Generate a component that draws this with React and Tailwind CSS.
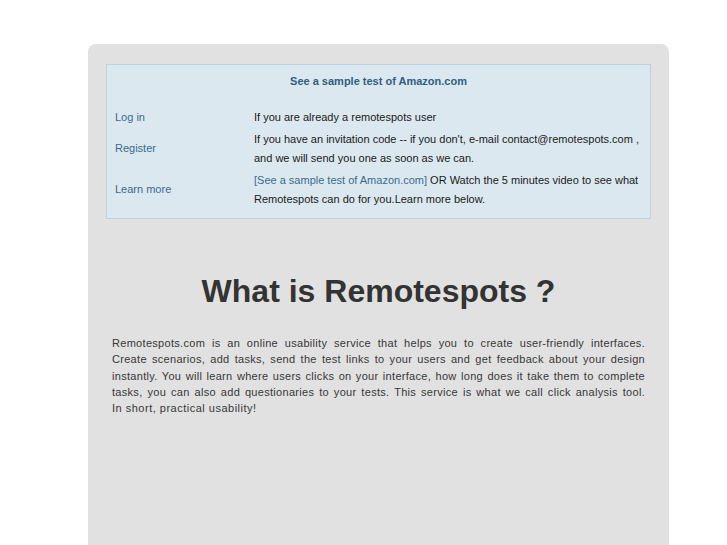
import React from 'react';

const rows = [
  {
    label: 'Log in',
    body: <>If you are already a remotespots user</>,
  },
  {
    label: 'Register',
    body: (
      <>
        If you have an invitation code -- if you don't, e-mail contact@remotespots.com ,
        <br />
        and we will send you one as soon as we can.
      </>
    ),
  },
  {
    label: 'Learn more',
    body: (
      <>
        <span className="text-[#3a6b8c]">[See a sample test of Amazon.com]</span> OR Watch the 5 minutes video to see what
        <br />
        Remotespots can do for you.Learn more below.
      </>
    ),
  },
];

const lines = [
  'Remotespots.com is an online usability service that helps you to create user-friendly interfaces.',
  'Create scenarios, add tasks, send the test links to your users and get feedback about your design',
  'instantly. You will learn where users clicks on your interface, how long does it take them to complete',
  'tasks, you can also add questionaries to your tests. This service is what we call click analysis tool.',
];

export default function App() {
  return (
    <div className="min-h-[545px] bg-white font-['Liberation_Sans',Arial,sans-serif] pt-[44px]">
      <div className="ml-[88px] w-[581px] min-h-[501px] rounded-t-[8px] bg-[#e1e1e1] px-[18px] pt-[20px]">
        <div className="border border-[#bcd3df] bg-[#dce8f0] px-[8px] pt-[8px] pb-[8px] text-[11px] text-[#1a1a1a]">
          <div className="text-center text-[11px] font-bold leading-[16px] text-[#2f5f80]">
            See a sample test of Amazon.com
          </div>
          <div className="mt-[17px]">
            {rows.map((r) => (
              <div key={r.label} className="flex items-center py-[1.5px]">
                <div className="w-[139px] shrink-0 text-[#3a6b8c] leading-[19px]">{r.label}</div>
                <div className="leading-[19px]">{r.body}</div>
              </div>
            ))}
          </div>
        </div>

        <h1 className="mt-[52px] text-center text-[32px] font-bold leading-[40px] text-[#333333]">
          What is Remotespots ?
        </h1>

        <div className="mt-[24px] px-[6px] text-[11px] leading-[16.3px] tracking-[0.3px] text-[#383838]">
          {lines.map((l) => (
            <div key={l} className="text-justify [text-align-last:justify]">
              {l}
            </div>
          ))}
          <div className="tracking-[0.5px]">In short, practical usability!</div>
        </div>
      </div>
    </div>
  );
}
